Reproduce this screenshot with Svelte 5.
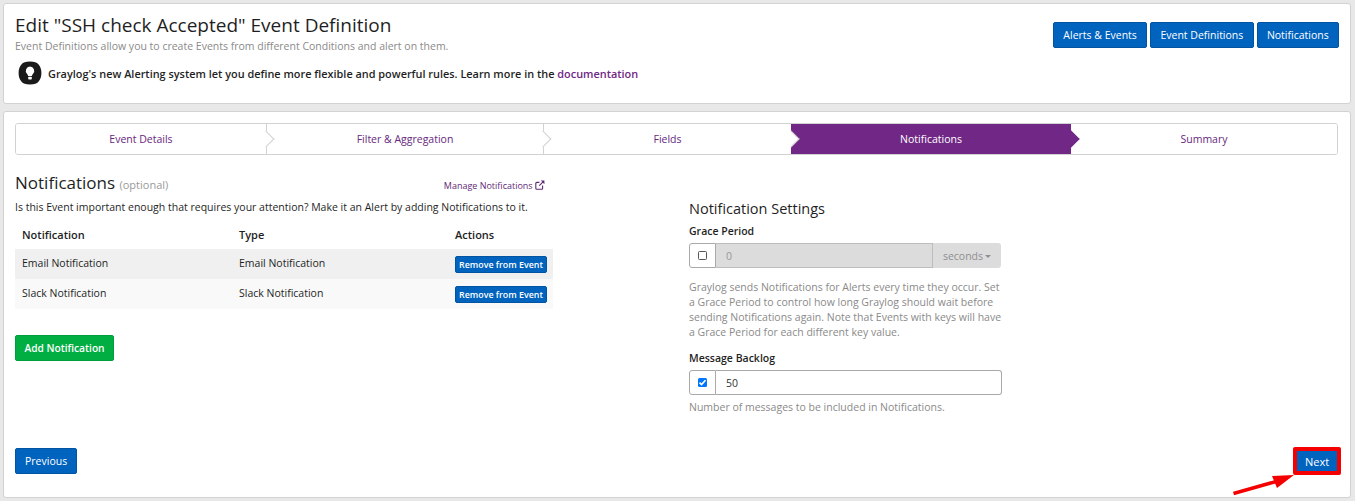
<script lang="ts">
  const steps = [
    { label: 'Event Details', width: 250 },
    { label: 'Filter & Aggregation', width: 277 },
    { label: 'Fields', width: 248 },
    { label: 'Notifications', width: 280, active: true },
    { label: 'Summary', width: 266 },
  ]
  const rows = ['Email Notification', 'Slack Notification']
</script>

<div class="page">
  <section class="card head">
    <div class="head-text">
      <h1>Edit "SSH check Accepted" Event Definition</h1>
      <p class="sub">Event Definitions allow you to create Events from different Conditions and alert on them.</p>
      <div class="tip">
        <svg class="bulb" width="24" height="24" viewBox="0 0 24 24" aria-hidden="true">
          <path d="M12 .5c4.600 0 6.800 1 8.400 2.800 1.900 2 3 4.900 3 8.700s-1.100 6.700-3 8.700c-1.600 1.800-3.800 2.800-8.400 2.800s-6.800-1-8.400-2.800C1.700 18.700.6 15.800.6 12s1.100-6.700 3-8.700C5.200 1.500 7.400.5 12 .5z" fill="#1a1a1a"/>
          <path d="M12 5.500a4.300 4.300 0 0 0-3 7.300c.7.800 1 1.500 1.100 2.200h3.800c.1-.7.400-1.400 1.100-2.200a4.300 4.300 0 0 0-3-7.300z" fill="#fff"/>
          <rect x="10.200" y="15.800" width="3.600" height="2.700" rx=".8" fill="#fff"/>
        </svg>
        <span>Graylog's new Alerting system let you define more flexible and powerful rules. Learn more in the <a href="#docs">documentation</a></span>
      </div>
    </div>
    <div class="head-actions">
      <button class="btn">Alerts &amp; Events</button>
      <button class="btn">Event Definitions</button>
      <button class="btn">Notifications</button>
    </div>
  </section>

  <section class="card main">
    <div class="stepper" style={`grid-template-columns: ${steps.map((s) => s.width + 'px').join(' ')}`}>
      {#each steps as s, i}
        <div class="step" class:active={s.active} class:after-active={steps[i - 1]?.active}>{s.label}</div>
      {/each}
    </div>

    <div class="columns">
      <div class="left">
        <div class="title-row">
          <h2>Notifications <small>(optional)</small></h2>
          <a class="manage" href="#manage">Manage Notifications
            <svg width="10" height="10" viewBox="0 0 10 10" aria-hidden="true">
              <path d="M7.600 5.600v2.600a1 1 0 0 1-1 1H1.800a1 1 0 0 1-1-1V3.400a1 1 0 0 1 1-1h2.600" fill="none" stroke="currentColor" stroke-width="1.100"/>
              <path d="M5.800.6h3.600v3.600L8 2.800 4.700 6.100 3.900 5.300 7.200 2z" fill="currentColor"/>
            </svg>
          </a>
        </div>
        <p class="lead">Is this Event important enough that requires your attention? Make it an Alert by adding Notifications to it.</p>
        <table>
          <thead>
            <tr><th>Notification</th><th>Type</th><th>Actions</th></tr>
          </thead>
          <tbody>
            {#each rows as r}
              <tr>
                <td>{r}</td>
                <td>{r}</td>
                <td class="acts"><button class="btn xs">Remove from Event</button></td>
              </tr>
            {/each}
          </tbody>
        </table>
        <button class="btn add">Add Notification</button>
      </div>

      <div class="right">
        <h3>Notification Settings</h3>
        <div class="label">Grace Period</div>
        <div class="group disabled">
          <span class="addon"><span class="box"></span></span>
          <span class="field">0</span>
          <span class="unit">seconds<i class="caret"></i></span>
        </div>
        <p class="help grace">Graylog sends Notifications for Alerts every time they occur. Set a Grace Period to control how long Graylog should wait before sending Notifications again. Note that Events with keys will have a Grace Period for each different key value.</p>
        <div class="label">Message Backlog</div>
        <div class="group">
          <span class="addon">
            <span class="box checked">
              <svg width="9" height="9" viewBox="0 0 9 9" aria-hidden="true"><path d="M1.500 4.600l2 2 4-4.400" fill="none" stroke="#fff" stroke-width="1.700"/></svg>
            </span>
          </span>
          <span class="field">50</span>
        </div>
        <p class="help">Number of messages to be included in Notifications.</p>
      </div>
    </div>

    <div class="footer">
      <button class="btn nav">Previous</button>
      <button class="btn nav next">Next</button>
    </div>
  </section>

  <svg class="arrow" width="70" height="30" viewBox="0 0 70 30" aria-hidden="true">
    <path d="M1.500 25.500L46 13" stroke="#f40000" stroke-width="3.500" fill="none"/>
    <path d="M40 8L62 7 45 20z" fill="#f40000"/>
  </svg>
</div>

<style>
  :global(body) { margin: 0; background: #e8e8e8; }
  .page {
    position: relative;
    height: 501px;
    overflow: hidden;
    padding: 3px 4px 0 3px;
    box-sizing: border-box;
    font-family: "Open Sans", sans-serif;
    font-size: 11px;
    color: #1f1f1f;
    display: flex;
    flex-direction: column;
    gap: 7px;
  }
  .card {
    background: #fff;
    border: 1px solid #d2d2d2;
    border-radius: 3px;
    box-sizing: border-box;
  }
  .head {
    height: 101px;
    display: flex;
    justify-content: space-between;
    padding: 9px 11px 0 11px;
  }
  h1 { margin: 0; font-size: 19px; line-height: 25px; font-weight: 400; color: #1f1f1f; }
  .sub { margin: 1px 0 0; font-size: 10.5px; line-height: 15px; color: #8a8a8a; }
  .tip { display: flex; align-items: center; gap: 6px; margin: 7px 0 0 3px; font-size: 10.9px; font-weight: 600; }
  .bulb { flex: none; }
  .tip a { color: #702785; text-decoration: none; }
  .head-actions { display: flex; gap: 3px; margin-top: 9px; }
  .btn {
    font-family: inherit;
    background: #0063be;
    color: #fff;
    border: 1px solid #0054a1;
    border-radius: 2px;
    font-size: 10.5px;
    font-weight: 400;
    padding: 0;
  }
  .head-actions .btn { height: 26px; padding: 0 9.300px; }
  .main { height: 387px; padding: 11px 12px 0 11px; position: relative; }
  .stepper {
    display: grid;
    height: 32px;
    border: 1px solid #d2d2d2;
    border-radius: 3px;
    box-sizing: border-box;
    width: 1323px;
    overflow: hidden;
  }
  .step {
    position: relative;
    display: flex;
    align-items: center;
    justify-content: center;
    color: #66277d;
    background: #fff;
    font-size: 10.5px;
  }
  .step + .step { border-left: 1px solid #d2d2d2; }
  .step:not(:last-child)::after {
    content: '';
    position: absolute;
    z-index: 2;
    right: -6px;
    top: 9px;
    width: 11px;
    height: 11px;
    background: #fff;
    border-top: 1px solid #d2d2d2;
    border-right: 1px solid #d2d2d2;
    transform: rotate(45deg);
  }
  .step.active { background: #702785; color: #fff; border-left: 0; }
  .step.active::after { background: #702785; border-color: #702785; }
  .step.after-active { border-left: 0; }
  .columns { display: flex; height: 271px; }
  .left { width: 538px; padding-top: 17px; }
  .title-row { display: flex; justify-content: space-between; align-items: baseline; width: 530px; }
  h2 { margin: 0; font-size: 17px; line-height: 22px; font-weight: 400; }
  h2 small { font-size: 11px; color: #9a9a9a; }
  .manage { color: #5f2a78; text-decoration: none; font-size: 9px; }
  .manage svg { vertical-align: -1px; }
  .lead { margin: 4px 0 0; font-size: 10.5px; line-height: 15px; }
  table { border-collapse: collapse; width: 538px; margin-top: 4px; font-size: 10.5px; }
  th { text-align: left; font-weight: 600; height: 30px; padding: 0 7px; font-size: 11px; }
  th:nth-child(1) { width: 203px; }
  th:nth-child(2) { width: 202px; }
  td { padding: 0 7px 2px; height: 28px; }
  td.acts { padding: 0 6px 0 7px; }
  tbody tr:nth-child(1) { background: #f0f0f0; }
  tbody tr:nth-child(2) { background: #f9f9f9; }
  .xs { display: block; height: 17px; width: 92px; font-size: 8.900px; font-weight: 600; }
  .add { display: block; margin-top: 26px; height: 26px; width: 99px; background: #00ae42; border-color: #009e3c; font-weight: 600; font-size: 10.200px; }
  .right { margin-left: 136px; width: 313px; padding-top: 44px; }
  h3 { margin: 0; font-size: 14.500px; line-height: 20px; font-weight: 400; }
  .label { font-weight: 600; font-size: 10.5px; line-height: 14px; margin-top: 5px; }
  .group { display: flex; height: 25px; margin-top: 5px; }
  .addon {
    width: 27px;
    box-sizing: border-box;
    border: 1px solid #a9a9a9;
    border-radius: 3px 0 0 3px;
    display: flex;
    align-items: center;
    justify-content: center;
  }
  .box { width: 7px; height: 7px; border: 1px solid #555; border-radius: 1.500px; display: block; line-height: 0; background: #fff; }
  .box.checked { width: 9px; height: 9px; border: 0; background: #0075ff; }
  .field {
    flex: 1;
    border: 1px solid #a9a9a9;
    border-left: 0;
    border-radius: 0 3px 3px 0;
    padding-left: 10px;
    display: flex;
    align-items: center;
    font-size: 10.5px;
    color: #333;
  }
  .disabled .field { background: #dcdcdc; color: #999; border-radius: 0; border-color: #bdbdbd; }
  .unit {
    width: 68px;
    background: #dcdcdc;
    color: #8f8f8f;
    display: flex;
    align-items: center;
    justify-content: center;
    gap: 2px;
    font-size: 10.5px;
    border-radius: 0 3px 3px 0;
  }
  .caret { width: 0; height: 0; border: 3px solid transparent; border-top-color: #8f8f8f; border-bottom: 0; margin-top: 1px; }
  .disabled { width: 312px; }
  .help { margin: 5px 0 0; font-size: 10.5px; line-height: 15px; color: #8a8a8a; }
  .help.grace { margin-top: 12px; margin-bottom: 11px; }
  .footer { display: flex; justify-content: space-between; align-items: center; margin-top: 21px; }
  .nav { height: 26px; padding: 0 9px; font-size: 10.5px; }
  .next {
    box-sizing: border-box;
    width: 48px;
    height: 28px;
    margin-right: -3px;
    border: 4px solid #f40000;
    border-radius: 2px;
    padding: 0;
    font-size: 11px;
  }
  .arrow { position: absolute; left: 1232px; top: 468px; }
</style>
